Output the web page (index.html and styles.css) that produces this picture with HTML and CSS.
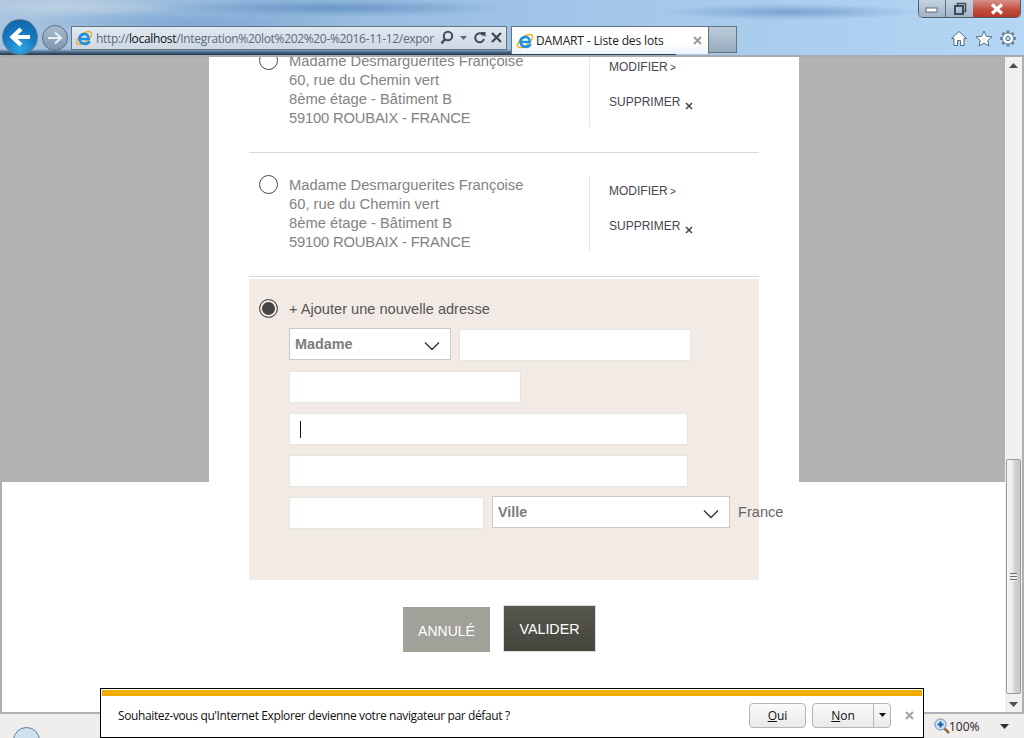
FILE: index.html
```html
<!DOCTYPE html>
<html lang="fr">
<head>
<meta charset="utf-8">
<title>DAMART - Liste des lots</title>
<link rel="stylesheet" href="styles.css">
</head>
<body>
<div class="window">
  <header class="chrome">
    <div class="titlebar">
      <div class="winbtns">
        <div class="winbtn win-min"><svg width="14" height="8" viewBox="0 0 14 8"><rect x="1" y="3" width="11" height="4" fill="#fff" stroke="#5a6d80"/></svg></div>
        <div class="winbtn win-max"><svg width="14" height="14" viewBox="0 0 14 14"><path d="M4.500 3.500V1.500H12.500V9.500H10.500" fill="none" stroke="#3d4c5c" stroke-width="1.500"/><rect x="2" y="4" width="8" height="8" fill="none" stroke="#3d4c5c" stroke-width="2"/></svg></div>
        <div class="winbtn win-close"><svg width="18" height="12" viewBox="0 0 18 12"><path d="M4 1.500L14 10.500M14 1.500L4 10.500" stroke="#fff" stroke-width="3.200"/></svg></div>
      </div>
    </div>
    <div class="navbar">
      <div class="back"><svg width="24" height="22" viewBox="0 0 24 22"><path d="M22 11H6M13 3L4.500 11L13 19" fill="none" stroke="#fff" stroke-width="4.200"/></svg></div>
      <div class="forward"><svg width="16" height="14" viewBox="0 0 16 14"><path d="M1 7H13M8 1.500L14 7L8 12.500" fill="none" stroke="#e8eef4" stroke-width="2.200"/></svg></div>
      <div class="address">
        <svg class="ie" width="18" height="18" viewBox="0 0 18 18"><ellipse cx="9" cy="9" rx="9" ry="4.200" transform="rotate(-38 9 9)" fill="none" stroke="#f2b01e" stroke-width="1.400"/><path d="M15 10H4.500C4.500 4.500 12.500 3 13.500 8.500M14.500 12C13 16 5.500 16 4.500 10.500" fill="none" stroke="#1f8fe0" stroke-width="2.600"/></svg>
        <div class="url">http://<b>localhost</b>/Integration%20lot%202%20-%2016-11-12/expor</div>
        <svg class="addr-icons" width="68" height="16" viewBox="0 0 68 16"><circle cx="9" cy="6" r="4.200" fill="none" stroke="#3f4a55" stroke-width="2"/><path d="M6 9L2.500 13.500" stroke="#3f4a55" stroke-width="2.400"/><path d="M21 6H28L24.500 10Z" fill="#5a6672"/><path d="M44.500 5.500A4.500 4.500 0 1 0 45 9" fill="none" stroke="#3f4a55" stroke-width="2"/><path d="M41.500 2H46.500V7Z" fill="#3f4a55"/><path d="M53 3L62 12M62 3L53 12" stroke="#3f4a55" stroke-width="2.300"/></svg>
      </div>
      <div class="tab">
        <svg class="ie" width="18" height="18" viewBox="0 0 18 18"><ellipse cx="9" cy="9" rx="9" ry="4.200" transform="rotate(-38 9 9)" fill="none" stroke="#f2b01e" stroke-width="1.400"/><path d="M15 10H4.500C4.500 4.500 12.500 3 13.500 8.500M14.500 12C13 16 5.500 16 4.500 10.500" fill="none" stroke="#1f8fe0" stroke-width="2.600"/></svg>
        <span class="tab-title">DAMART - Liste des lots</span>
        <svg class="tab-x" width="9" height="9" viewBox="0 0 9 9"><path d="M1 1L8 8M8 1L1 8" stroke="#9a9a9a" stroke-width="2"/></svg>
      </div>
      <div class="newtab"></div>
      <div class="tools">
        <svg width="18" height="17" viewBox="0 0 18 17"><path d="M9 1.500L1.500 8.500H4V15.500H7.500V10.500H10.500V15.500H14V8.500H16.500Z" fill="#fff" stroke="#4f6d8a"/></svg>
        <svg width="18" height="17" viewBox="0 0 18 17"><path d="M9 1L11.300 6.300L17 6.800L12.700 10.500L14 16L9 13.100L4 16L5.300 10.500L1 6.800L6.700 6.300Z" fill="#fff" stroke="#4f6d8a"/></svg>
        <svg width="18" height="17" viewBox="0 0 18 17"><path d="M9 .5V3M9 14V16.500M1 8.500H3.500M14.500 8.500H17M3.300 2.800L5 4.500M13 12.500L14.700 14.200M14.700 2.800L13 4.500M5 12.500L3.300 14.200" stroke="#6f88a0" stroke-width="3"/><circle cx="9" cy="8.500" r="5.500" fill="#fff" stroke="#5f7a94" stroke-width="1"/><circle cx="9" cy="8.500" r="2.300" fill="#b8d6f0" stroke="#4f6d8a"/></svg>
      </div>
    </div>
  </header>

  <div class="viewport">
    <main class="page">
      <div class="sheet">
        <section class="addr-row addr-first">
          <span class="radio"></span>
          <div class="addr-text">Madame Desmarguerites Françoise<br>60, rue du Chemin vert<br>8ème étage - Bâtiment B<br><span class="caps">59100 ROUBAIX - FRANCE</span></div>
          <div class="actions">
            <div class="action">MODIFIER <span class="gt">&gt;</span></div>
            <div class="action">SUPPRIMER <svg class="del" width="8" height="8" viewBox="0 0 8 8"><path d="M1 1L7 7M7 1L1 7" stroke="#444" stroke-width="1.500"/></svg></div>
          </div>
        </section>
        <section class="addr-row">
          <span class="radio"></span>
          <div class="addr-text">Madame Desmarguerites Françoise<br>60, rue du Chemin vert<br>8ème étage - Bâtiment B<br><span class="caps">59100 ROUBAIX - FRANCE</span></div>
          <div class="actions">
            <div class="action">MODIFIER <span class="gt">&gt;</span></div>
            <div class="action">SUPPRIMER <svg class="del" width="8" height="8" viewBox="0 0 8 8"><path d="M1 1L7 7M7 1L1 7" stroke="#444" stroke-width="1.500"/></svg></div>
          </div>
        </section>
        <section class="new-addr">
          <div class="new-head">
            <span class="radio radio-on"></span>
            <span class="new-label">+ Ajouter une nouvelle adresse</span>
          </div>
          <form class="form">
            <div class="form-row">
              <div class="select w-162">Madame<svg width="16" height="10" viewBox="0 0 16 10"><path d="M1 1.500L8 8.500L15 1.500" fill="none" stroke="#333" stroke-width="1.400"/></svg></div>
              <div class="field w-232 shift"></div>
            </div>
            <div class="field w-232"></div>
            <div class="field w-399"><span class="caret"></span></div>
            <div class="field w-399"></div>
            <div class="form-row row-last">
              <div class="field w-195 shift"></div>
              <div class="select w-238">Ville<svg width="16" height="10" viewBox="0 0 16 10"><path d="M1 1.500L8 8.500L15 1.500" fill="none" stroke="#333" stroke-width="1.400"/></svg></div>
              <span class="country">France</span>
            </div>
          </form>
        </section>
        <div class="buttons">
          <div class="btn btn-cancel">ANNULÉ</div>
          <div class="btn btn-ok">VALIDER</div>
        </div>
      </div>
    </main>
    <aside class="scrollbar">
      <svg class="sb-arrow" width="9" height="5" viewBox="0 0 9 5"><path d="M4.500 0L9 5H0Z" fill="#4d4d4d"/></svg>
      <div class="thumb"><span class="grip"></span></div>
      <svg class="sb-arrow" width="9" height="5" viewBox="0 0 9 5"><path d="M0 0H9L4.500 5Z" fill="#4d4d4d"/></svg>
    </aside>
  </div>

  <footer class="status">
    <div class="status-orb"></div>
    <div class="zoom">
      <svg width="16" height="16" viewBox="0 0 16 16"><path d="M10 10L15 15" stroke="#9a6a3a" stroke-width="2.500"/><circle cx="6.500" cy="6.500" r="5.500" fill="#cfe3f5" stroke="#6f8fae"/><path d="M6.500 3.500V9.500M3.500 6.500H9.500" stroke="#1c5fa8" stroke-width="2"/></svg>
      <span>100%</span>
      <svg class="zoom-arrow" width="9" height="5" viewBox="0 0 9 5"><path d="M0 0H9L4.500 5Z" fill="#333"/></svg>
    </div>
  </footer>

  <div class="notify">
    <div class="notify-band"></div>
    <div class="notify-body">
      <span class="notify-text">Souhaitez-vous qu'Internet Explorer devienne votre navigateur par défaut ?</span>
      <div class="ie-btn ie-oui"><u>O</u>ui</div>
      <div class="ie-btn ie-non"><span class="non-label"><u>N</u>on</span><span class="non-drop"><svg width="7" height="4" viewBox="0 0 7 4"><path d="M0 0H7L3.500 4Z" fill="#111"/></svg></span></div>
      <svg class="notify-x" width="9" height="9" viewBox="0 0 9 9"><path d="M1 1L8 8M8 1L1 8" stroke="#a3a3a3" stroke-width="2"/></svg>
    </div>
  </div>
</div>
</body>
</html>
```

FILE: styles.css
```css
* { box-sizing: border-box; }
html, body { margin: 0; padding: 0; overflow: hidden; }
body { font-family: "Liberation Sans", Arial, sans-serif; }

.window {
  position: relative;
  width: 1024px;
  height: 738px;
  overflow: hidden;
  display: flex;
  flex-direction: column;
  background: #f0eded;
}

/* Browser chrome */
.chrome {
  height: 57px;
  flex: none;
  border-bottom: 2px solid #a5abb0;
  background:
    linear-gradient(to bottom, transparent 49px, #4a6a88 52px, #26384a 55px),
    radial-gradient(ellipse 180px 9px at 330px 8px, #6a97c6 0, transparent 100%),
    radial-gradient(ellipse 130px 8px at 790px 12px, #7ba2d0 0, transparent 100%),
    radial-gradient(ellipse 160px 12px at 190px 22px, #7fa9d4 0, transparent 100%),
    radial-gradient(ellipse 120px 12px at 60px 6px, #bdd0e2 0, transparent 100%),
    linear-gradient(to right, #a8c4df 0, #93b8dc 25%, #a1c5e8 55%, #b5d6f4 100%);
  background-size: 66% 100%, 100% 100%, 100% 100%, 100% 100%, 100% 100%, 100% 100%;
  background-repeat: no-repeat;
}
.titlebar { height: 26px; display: flex; justify-content: flex-end; padding-right: 3px; }
.winbtns {
  display: flex;
  height: 18px;
  border: 1px solid #4c5b6a;
  border-top: 0;
  border-radius: 0 0 5px 5px;
  overflow: hidden;
  box-shadow: 0 0 1px #fff;
}
.winbtn { display: flex; align-items: center; justify-content: center; height: 17px; }
.win-min { width: 27px; background: linear-gradient(#c5d3e2, #a1b3c6); border-right: 1px solid #5a6d80; }
.win-max { width: 27px; background: linear-gradient(#c5d3e2, #a1b3c6); }
.win-close { width: 47px; background: linear-gradient(#d69188 0, #c24a3c 60%, #b53a2e 100%); }

.navbar { height: 29px; display: flex; align-items: flex-start; padding-left: 2px; }
.back {
  flex: none;
  width: 36px;
  height: 36px;
  margin-top: -7px;
  border-radius: 50%;
  border: 1px solid #5f7f9c;
  background: radial-gradient(circle at 50% 85%, #2fa5e0 0, #1679c2 50%, #0f5d9f 100%);
  display: flex;
  align-items: center;
  justify-content: center;
}
.forward {
  flex: none;
  width: 26px;
  height: 26px;
  margin: -1px 0 0 4px;
  border-radius: 50%;
  border: 1px solid #5b6f82;
  background: linear-gradient(#a9bccf, #7e96ad);
  display: flex;
  align-items: center;
  justify-content: center;
}
.address {
  flex: none;
  width: 436px;
  height: 24px;
  margin-left: 3px;
  border: 1px solid #66727e;
  background: linear-gradient(#e1e9f2, #ced9e4);
  display: flex;
  align-items: center;
  padding-left: 3px;
}
.ie { flex: none; }
.url {
  flex: none;
  width: 342px;
  margin-left: 3px;
  white-space: nowrap;
  font: 12px "Open Sans", "Noto Sans", sans-serif;
  letter-spacing: -.33px;
  color: #5d6a76;
}
.url b { font-weight: 400; color: #111; }
.addr-icons { margin-left: 1px; flex: none; }
.tab {
  flex: none;
  width: 198px;
  height: 28px;
  margin-left: 4px;
  border: 1px solid #66727e;
  border-bottom: 0;
  background: linear-gradient(#fff 60%, #e9f2fb);
  display: flex;
  align-items: center;
  padding-left: 4px;
}
.tab-title {
  flex: none;
  margin-left: 2px;
  width: 157px;
  font: 12px "Open Sans", "Noto Sans", sans-serif;
  letter-spacing: -.15px;
  color: #222;
  white-space: nowrap;
}
.tab-x { flex: none; }
.newtab {
  flex: none;
  width: 28px;
  height: 27px;
  border: 1px solid #66727e;
  border-left: 0;
  background: linear-gradient(#bccbda, #98abbe);
}
.tools {
  margin-left: auto;
  width: 74px;
  padding-top: 4px;
  padding-right: 7px;
  display: flex;
  justify-content: space-between;
}

/* Viewport */
.viewport {
  height: 657px;
  flex: none;
  display: flex;
  border-left: 2px solid #aeb1b4;
  border-right: 2px solid #aeb1b4;
  border-bottom: 2px solid #aeb1b4;
  overflow: hidden;
}
.page {
  width: 1003px;
  overflow: hidden;
  background: #fff linear-gradient(#b2b2b2, #b2b2b2) no-repeat 0 0 / 100% 425px;
}
.sheet {
  width: 590px;
  margin: -28px 0 0 207px;
  padding: 0 40px;
  height: 800px;
  background: #fff;
}

.addr-row {
  height: 124px;
  display: flex;
  align-items: flex-start;
  padding: 22px 0 0 10px;
  border-bottom: 1px solid #d8d8d6;
}
.radio {
  flex: none;
  width: 19px;
  height: 19px;
  border: 1px solid #4a4a4a;
  border-radius: 50%;
  background: #fff;
}
.radio-on {
  background: #444;
  box-shadow: inset 0 0 0 2px #f2ebe5;
}
.addr-text {
  flex: none;
  width: 300px;
  margin-left: 11px;
  padding-top: 1px;
  font-size: 14.75px;
  line-height: 19px;
  color: #838383;
  white-space: nowrap;
}
.caps { letter-spacing: -.18px; }
.actions {
  flex: none;
  width: 140px;
  height: 75px;
  margin-top: 1px;
  padding: 8px 0 0 19px;
  border-left: 1px solid #e6e6e6;
}
.action {
  font-size: 12px;
  line-height: 14px;
  color: #4a4650;
  margin-bottom: 20px;
  white-space: nowrap;
}
.gt { font-size: 10px; margin-left: -1px; }
.del { margin-left: 1px; vertical-align: -4px; }

.new-addr {
  height: 301px;
  margin-top: 2px;
  padding: 20px 0 0 10px;
  background: #f2ebe5;
}
.new-head { display: flex; align-items: center; height: 19px; gap: 11px; }
.new-label { font-size: 14.6px; color: #555; white-space: nowrap; }
.form {
  margin: 10px 0 0 30px;
  display: flex;
  flex-direction: column;
  gap: 10px;
}
.form-row { display: flex; align-items: flex-start; gap: 8px; }
.row-last { margin-top: -1px; }
.field {
  flex: none;
  height: 32px;
  background: #fff;
  border: 1px solid #e7e3de;
  display: flex;
  align-items: center;
  padding-left: 10px;
}
.shift { margin-top: 1px; }
.select {
  flex: none;
  height: 32px;
  background: #fff;
  border: 1px solid #c9c9c9;
  display: flex;
  align-items: center;
  justify-content: space-between;
  padding: 0 10px 0 5px;
  font-size: 14.4px;
  font-weight: 700;
  color: #7d7d7d;
}
.select svg { margin-top: 3px; }
.w-162 { width: 162px; }
.w-232 { width: 232px; }
.w-399 { width: 399px; }
.w-195 { width: 195px; }
.w-238 { width: 238px; }
.caret { width: 1px; height: 17px; background: #111; }
.country { flex: none; font-size: 14.6px; line-height: 32px; color: #666; }

.buttons { display: flex; align-items: flex-start; gap: 13px; margin-top: 25px; padding-left: 154px; }
.btn {
  display: flex;
  align-items: center;
  justify-content: center;
  font-size: 14px;
  color: #fff;
}
.btn-cancel { width: 87px; height: 45px; margin-top: 2px; background: #a2a199; padding-top: 2px; }
.btn-ok {
  width: 93px;
  height: 47px;
  border: 1px solid #dcdcda;
  font-size: 14.3px;
  background: linear-gradient(#56564f, #45453e);
}

/* Scrollbar */
.scrollbar {
  width: 17px;
  flex: none;
  background: #f0f0f0;
  display: flex;
  flex-direction: column;
  align-items: center;
}
.sb-arrow { flex: none; margin: 6px 0 0; }
.thumb {
  width: 15px;
  height: 235px;
  margin-top: 391px;
  border: 1px solid #9b9b9b;
  border-radius: 2px;
  background: linear-gradient(to right, #f4f4f4 0, #ececec 45%, #d4d4d6 55%, #c8c8ca 100%);
  display: flex;
  align-items: center;
  justify-content: center;
}
.grip {
  width: 7px;
  height: 8px;
  background: repeating-linear-gradient(#6e6e6e 0, #6e6e6e 1px, #eee 1px, #eee 3px);
}
.thumb + .sb-arrow { margin-top: 8px; }

/* Status bar */
.status { flex: 1; display: flex; justify-content: flex-end; background: #f0eded; }
.status-orb {
  width: 27px;
  height: 27px;
  margin: 13px auto 0 13px;
  border-radius: 50%;
  border: 1px solid #5f7e9a;
  background: #cfe0ee;
}
.zoom {
  width: 90px;
  display: flex;
  align-items: center;
  font: 12px "Open Sans", "Noto Sans", sans-serif;
  color: #222;
  height: 24px;
}
.zoom span { margin-left: -1px; }
.zoom-arrow { margin-left: 20px; }

/* Notification */
.notify {
  position: absolute;
  left: 100px;
  top: 688px;
  width: 824px;
  height: 50px;
  border: 1px solid #000;
  background: #fff;
  padding: 1px;
}
.notify-band { height: 6px; background: #f2ae00; }
.notify-body { height: 40px; display: flex; align-items: center; padding-left: 16px; margin-top: -1px; }
.notify-text {
  flex: none;
  width: 631px;
  font: 12px "Open Sans", "Noto Sans", sans-serif;
  letter-spacing: -.38px;
  color: #111;
  white-space: nowrap;
}
.ie-btn {
  flex: none;
  height: 25px;
  border: 1px solid #b5b5b5;
  border-radius: 4px;
  background: linear-gradient(#fafafa, #e9e9e9);
  font: 12px "Open Sans", "Noto Sans", sans-serif;
  color: #111;
  display: flex;
  align-items: center;
  justify-content: center;
}
.ie-oui { width: 57px; }
.ie-non { width: 79px; margin-left: 6px; }
.non-label { flex: 1; text-align: center; }
.non-drop {
  width: 17px;
  height: 100%;
  border-left: 1px solid #b5b5b5;
  display: flex;
  align-items: center;
  justify-content: center;
}
.notify-x { margin-left: 14px; flex: none; }
```
